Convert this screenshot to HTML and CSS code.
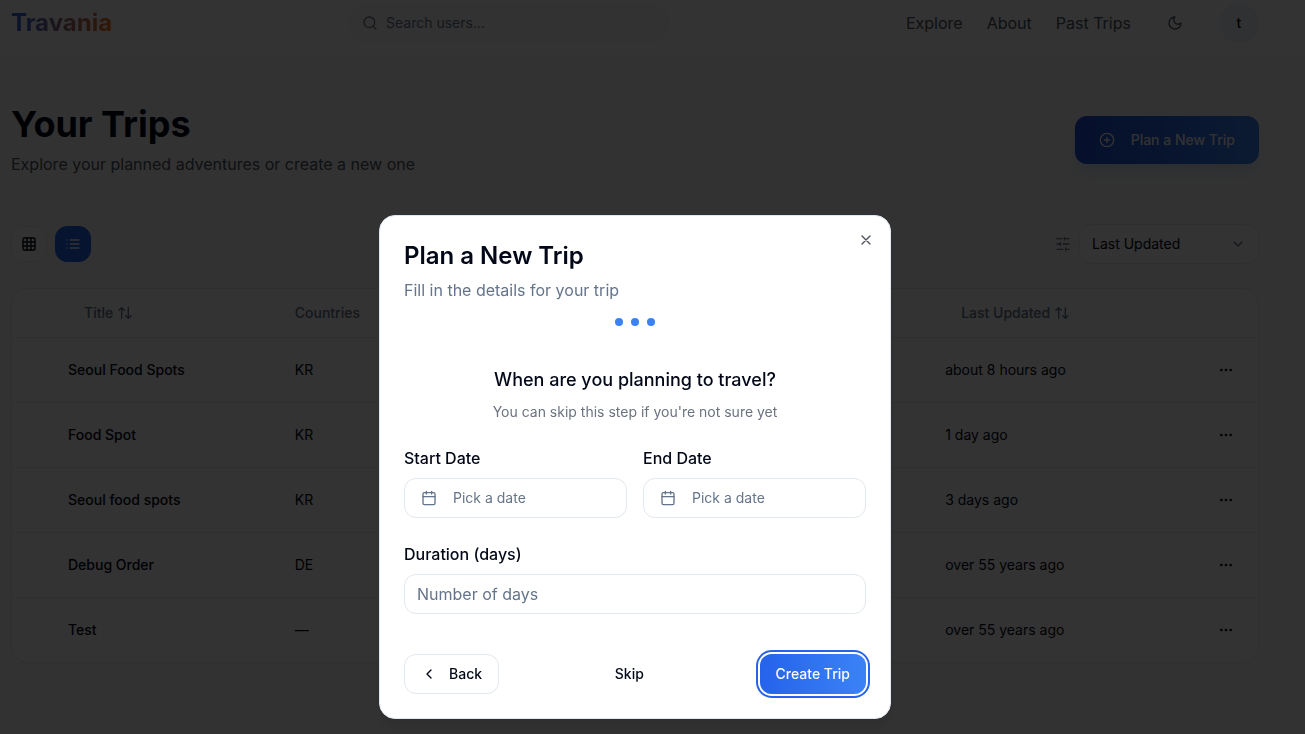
FILE: index.html
```html
<!DOCTYPE html>
<html lang="en">

<head>
    <meta charset="UTF-8">
    <meta name="viewport" content="width=device-width, initial-scale=1.0">
    <title>Travania</title>
    <link rel="stylesheet" href="styles.css">
</head>

<body>

    <header class="header">
        <div class="container header-row">
            <a href="#" class="logo">Travania</a>
            <div class="search">
                <svg class="icon" viewBox="0 0 24 24"><circle cx="11" cy="11" r="8"/><path d="m21 21-4.3-4.3"/></svg>
                <input type="text" placeholder="Search users..." aria-label="Search users">
            </div>
            <nav class="nav">
                <a href="#">Explore</a>
                <a href="#">About</a>
                <a href="#">Past Trips</a>
                <button class="theme-button" aria-label="Toggle theme">
                    <svg class="icon" viewBox="0 0 24 24"><path d="M12 3a6 6 0 0 0 9 9 9 9 0 1 1-9-9Z"/></svg>
                </button>
                <button class="avatar">t</button>
            </nav>
        </div>
    </header>

    <main class="container main">
        <div class="page-head">
            <div>
                <h1>Your Trips</h1>
                <p>Explore your planned adventures or create a new one</p>
            </div>
            <button class="plan-button">
                <svg class="icon" viewBox="0 0 24 24"><circle cx="12" cy="12" r="10"/><path d="M8 12h8M12 8v8"/></svg>
                Plan a New Trip
            </button>
        </div>

        <div class="toolbar">
            <div class="views">
                <button class="view-button" aria-label="Grid view">
                    <svg class="icon" viewBox="0 0 24 24"><rect width="18" height="18" x="3" y="3" rx="2"/><path d="M3 9h18M3 15h18M9 3v18M15 3v18"/></svg>
                </button>
                <button class="view-button active" aria-label="List view">
                    <svg class="icon" viewBox="0 0 24 24"><path d="M8 6h13M8 12h13M8 18h13M3 6h.01M3 12h.01M3 18h.01"/></svg>
                </button>
            </div>
            <div class="sort">
                <svg class="icon" viewBox="0 0 24 24"><path d="M21 4h-7M10 4H3M21 12h-9M8 12H3M21 20h-5M12 20H3M14 2v4M8 10v4M16 18v4"/></svg>
                <div class="select-wrap">
                    <select aria-label="Sort by">
                        <option>Last Updated</option>
                    </select>
                    <svg class="icon chevron" viewBox="0 0 24 24"><path d="m6 9 6 6 6-6"/></svg>
                </div>
            </div>
        </div>

        <div class="table-card">
            <table>
                <colgroup>
                    <col class="col-mark">
                    <col class="col-title">
                    <col class="col-countries">
                    <col class="col-updated">
                    <col>
                </colgroup>
                <thead>
                    <tr>
                        <th></th>
                        <th>
                            <button class="sort-button">Title <svg class="icon" viewBox="0 0 24 24"><path d="m21 16-4 4-4-4M17 20V4M3 8l4-4 4 4M7 4v16"/></svg></button>
                        </th>
                        <th>Countries</th>
                        <th>
                            <button class="sort-button">Last Updated <svg class="icon" viewBox="0 0 24 24"><path d="m21 16-4 4-4-4M17 20V4M3 8l4-4 4 4M7 4v16"/></svg></button>
                        </th>
                        <th></th>
                    </tr>
                </thead>
                <tbody>
                    <tr>
                        <td></td>
                        <td class="trip">Seoul Food Spots</td>
                        <td>KR</td>
                        <td>about 8 hours ago</td>
                        <td class="actions"><button class="more" aria-label="More"><svg class="icon" viewBox="0 0 24 24"><circle cx="12" cy="12" r="1"/><circle cx="19" cy="12" r="1"/><circle cx="5" cy="12" r="1"/></svg></button></td>
                    </tr>
                    <tr>
                        <td></td>
                        <td class="trip">Food Spot</td>
                        <td>KR</td>
                        <td>1 day ago</td>
                        <td class="actions"><button class="more" aria-label="More"><svg class="icon" viewBox="0 0 24 24"><circle cx="12" cy="12" r="1"/><circle cx="19" cy="12" r="1"/><circle cx="5" cy="12" r="1"/></svg></button></td>
                    </tr>
                    <tr>
                        <td></td>
                        <td class="trip">Seoul food spots</td>
                        <td>KR</td>
                        <td>3 days ago</td>
                        <td class="actions"><button class="more" aria-label="More"><svg class="icon" viewBox="0 0 24 24"><circle cx="12" cy="12" r="1"/><circle cx="19" cy="12" r="1"/><circle cx="5" cy="12" r="1"/></svg></button></td>
                    </tr>
                    <tr>
                        <td></td>
                        <td class="trip">Debug Order</td>
                        <td>DE</td>
                        <td>over 55 years ago</td>
                        <td class="actions"><button class="more" aria-label="More"><svg class="icon" viewBox="0 0 24 24"><circle cx="12" cy="12" r="1"/><circle cx="19" cy="12" r="1"/><circle cx="5" cy="12" r="1"/></svg></button></td>
                    </tr>
                    <tr>
                        <td></td>
                        <td class="trip">Test</td>
                        <td>—</td>
                        <td>over 55 years ago</td>
                        <td class="actions"><button class="more" aria-label="More"><svg class="icon" viewBox="0 0 24 24"><circle cx="12" cy="12" r="1"/><circle cx="19" cy="12" r="1"/><circle cx="5" cy="12" r="1"/></svg></button></td>
                    </tr>
                </tbody>
            </table>
        </div>
    </main>

    <div class="overlay">
        <div class="modal" role="dialog" aria-modal="true" aria-labelledby="modalTitle">
            <button class="close" aria-label="Close">
                <svg class="icon" viewBox="0 0 24 24"><path d="M18 6 6 18M6 6l12 12"/></svg>
            </button>
            <h2 id="modalTitle">Plan a New Trip</h2>
            <p class="modal-text">Fill in the details for your trip</p>
            <div class="steps">
                <span class="dot"></span>
                <span class="dot"></span>
                <span class="dot"></span>
            </div>

            <h3>When are you planning to travel?</h3>
            <p class="hint">You can skip this step if you're not sure yet</p>

            <div class="dates">
                <div class="field">
                    <label for="startDate">Start Date</label>
                    <button class="date-button" id="startDate">
                        <svg class="icon" viewBox="0 0 24 24"><path d="M8 2v4M16 2v4"/><rect width="18" height="18" x="3" y="4" rx="2"/><path d="M3 10h18"/></svg>
                        Pick a date
                    </button>
                </div>
                <div class="field">
                    <label for="endDate">End Date</label>
                    <button class="date-button" id="endDate">
                        <svg class="icon" viewBox="0 0 24 24"><path d="M8 2v4M16 2v4"/><rect width="18" height="18" x="3" y="4" rx="2"/><path d="M3 10h18"/></svg>
                        Pick a date
                    </button>
                </div>
            </div>
            <div class="field">
                <label for="duration">Duration (days)</label>
                <input type="text" inputmode="numeric" id="duration" placeholder="Number of days">
            </div>

            <div class="modal-footer">
                <button class="btn btn-outline">
                    <svg class="icon" viewBox="0 0 24 24"><path d="m15 18-6-6 6-6"/></svg>
                    Back
                </button>
                <button class="btn">Skip</button>
                <button class="btn btn-primary">Create Trip</button>
            </div>
        </div>
    </div>

</body>

</html>
```
FILE: styles.css
```css
/* Global Styling */
* {
    box-sizing: border-box;
}

body {
    font-family: Inter, 'Liberation Sans', sans-serif;
    font-size: 16px;
    line-height: 24px;
    margin: 0;
    padding: 0;
    background: #fafafa;
    color: #020817;
    overflow: hidden;
}

h1,
h2,
h3,
p {
    margin: 0;
}

a {
    color: inherit;
    text-decoration: none;
}

button,
input,
select {
    font: inherit;
    color: inherit;
}

button {
    display: inline-flex;
    align-items: center;
    justify-content: center;
    padding: 0;
    border: none;
    background: none;
    font-size: 14px;
    line-height: 20px;
    font-weight: 500;
    white-space: nowrap;
    cursor: pointer;
}

.icon {
    width: 16px;
    height: 16px;
    flex-shrink: 0;
    fill: none;
    stroke: currentColor;
    stroke-width: 2;
    stroke-linecap: round;
    stroke-linejoin: round;
}

.container {
    margin-right: 35px;
    padding: 0 11px;
}

/* Header */
.header {
    background: #fff;
    padding: 3px 0 12px;
}

.header-row {
    display: flex;
    align-items: center;
    justify-content: space-between;
}

.logo {
    font-size: 24px;
    line-height: 32px;
    font-weight: 700;
    background: linear-gradient(to right, #2563eb, #f97316);
    -webkit-background-clip: text;
    background-clip: text;
    color: transparent;
}

.search {
    display: flex;
    align-items: center;
    gap: 8px;
    width: 320px;
    height: 38px;
    padding: 0 12px;
    border: 1px solid #f1f2f4;
    border-radius: 19px;
    background: #f9fafb;
    color: #6b7280;
}

.search input {
    flex: 1;
    min-width: 0;
    padding: 0;
    border: none;
    outline: none;
    background: none;
    font-size: 14px;
}

.search input::placeholder {
    color: #64748b;
}

.nav {
    display: flex;
    align-items: center;
    gap: 24px;
    color: #4b5563;
}

.theme-button {
    width: 40px;
    height: 40px;
}

.avatar {
    width: 40px;
    height: 40px;
    border-radius: 50%;
    background: #f1f5f9;
    color: #020817;
}

/* Page heading */
.main {
    padding-top: 49px;
}

.page-head {
    display: flex;
    align-items: center;
    justify-content: space-between;
    margin-bottom: 48px;
}

.page-head h1 {
    font-size: 36px;
    line-height: 40px;
    font-weight: 700;
    margin-bottom: 8px;
}

.page-head p {
    color: #4b5563;
}

.plan-button {
    gap: 16px;
    height: 48px;
    padding: 0 24px;
    border-radius: 12px;
    background: linear-gradient(to right, #1d4ed8, #3b82f6);
    color: #f8fafc;
    box-shadow: 0 10px 15px -3px rgba(59, 130, 246, 0.2);
}

/* Toolbar */
.toolbar {
    display: flex;
    align-items: center;
    justify-content: space-between;
    margin-bottom: 24px;
}

.views,
.sort {
    display: flex;
    align-items: center;
    gap: 8px;
}

.sort {
    color: #64748b;
}

.view-button {
    width: 36px;
    height: 36px;
    border: 1px solid #e8ecf1;
    border-radius: 12px;
    background: #fcfcfc;
}

.view-button.active {
    border-color: #2563eb;
    background: #2563eb;
    color: #f8fafc;
}

.select-wrap {
    position: relative;
    width: 180px;
}

.select-wrap select {
    display: block;
    appearance: none;
    width: 100%;
    height: 40px;
    padding: 0 12px;
    border: 1px solid #e8ecf1;
    border-radius: 12px;
    background: #fcfcfc;
    color: #020817;
    font-size: 14px;
}

.chevron {
    position: absolute;
    top: 12px;
    right: 13px;
    pointer-events: none;
}

/* Trips table */
.table-card {
    border: 1px solid #e2e8f0;
    border-radius: 16px;
    background: #fcfcfc;
}

table {
    width: 100%;
    table-layout: fixed;
    border-collapse: collapse;
    font-size: 14px;
    line-height: 20px;
}

.col-mark {
    width: 40px;
}

.col-title {
    width: 18.2%;
}

.col-countries {
    width: 52.2%;
}

.col-updated {
    width: 18%;
}

th,
td {
    padding: 0 16px;
    text-align: left;
    white-space: nowrap;
}

th {
    height: 48px;
    color: #64748b;
    font-weight: 500;
}

td {
    height: 65px;
    border-top: 1px solid #e2e8f0;
}

.trip {
    font-weight: 500;
}

.sort-button {
    gap: 4px;
    padding: 0 16px;
}

.actions {
    text-align: right;
}

.more {
    width: 32px;
    height: 32px;
}

/* Modal */
.overlay {
    position: fixed;
    inset: 0;
    display: flex;
    align-items: flex-end;
    justify-content: center;
    padding: 0 35px 15px 0;
    background: rgba(0, 0, 0, 0.8);
}

.modal {
    position: relative;
    width: 100%;
    max-width: 512px;
    padding: 24px;
    border: 1px solid #e2e8f0;
    border-radius: 16px;
    background: #fff;
    box-shadow: 0 10px 15px -3px rgba(0, 0, 0, 0.1), 0 4px 6px -4px rgba(0, 0, 0, 0.1);
}

.close {
    position: absolute;
    top: 16px;
    right: 16px;
    opacity: 0.7;
}

.modal h2 {
    font-size: 24px;
    line-height: 32px;
    font-weight: 600;
    margin-bottom: 6px;
}

.modal-text {
    color: #64748b;
}

.steps {
    display: flex;
    justify-content: center;
    gap: 8px;
    margin: 16px 0 40px;
}

.dot {
    width: 8px;
    height: 8px;
    border-radius: 50%;
    background: #3b82f6;
}

.modal h3 {
    font-size: 18px;
    line-height: 28px;
    font-weight: 500;
    text-align: center;
    margin-bottom: 8px;
}

.hint {
    font-size: 14px;
    line-height: 20px;
    color: #6b7280;
    text-align: center;
    margin-bottom: 24px;
}

.dates {
    display: grid;
    grid-template-columns: 1fr 1fr;
    gap: 16px;
    margin-bottom: 24px;
}

.field {
    display: flex;
    flex-direction: column;
    gap: 8px;
}

.field label {
    font-weight: 500;
}

.date-button,
.field input {
    width: 100%;
    height: 40px;
    border: 1px solid #e2e8f0;
    border-radius: 12px;
    background: #fff;
}

.date-button {
    justify-content: flex-start;
    gap: 16px;
    padding: 0 16px;
    color: #64748b;
    font-weight: 400;
}

.field input {
    padding: 0 12px;
}

.field input::placeholder {
    color: #64748b;
}

.modal-footer {
    display: flex;
    align-items: center;
    justify-content: space-between;
    margin-top: 40px;
}

.btn {
    gap: 12px;
    height: 40px;
    padding: 0 16px;
    border-radius: 12px;
}

.btn-outline {
    border: 1px solid #e2e8f0;
}

.btn-primary {
    background: linear-gradient(to right, #2563eb, #3b82f6);
    color: #f8fafc;
    box-shadow: 0 0 0 2px #fff, 0 0 0 4px #2563eb;
}
```
